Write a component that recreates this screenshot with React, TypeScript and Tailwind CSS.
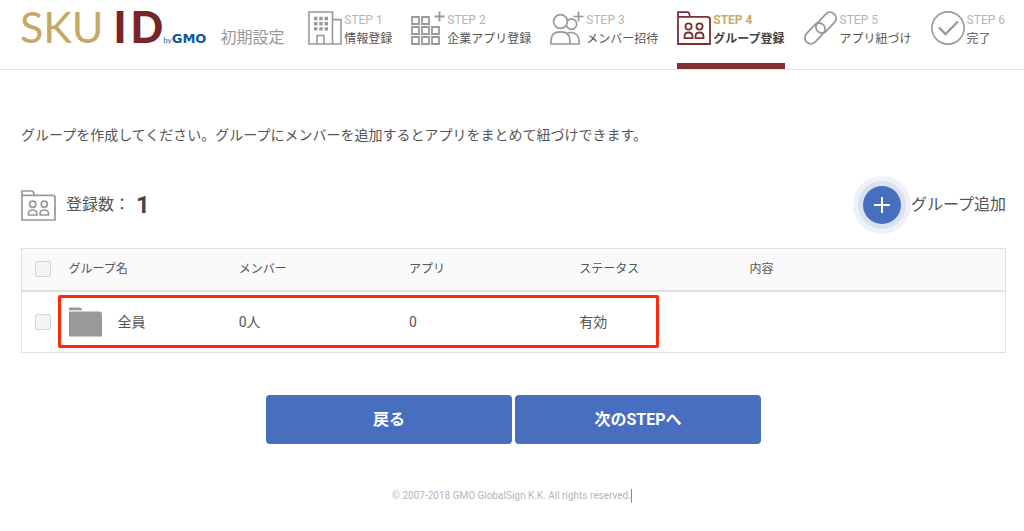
import type { ReactNode } from "react";

function BuildingIcon() {
  return (
    <svg width="34" height="34" viewBox="0 0 34 34" fill="none" stroke="currentColor" strokeWidth="1.6" aria-hidden="true">
      <path d="M1 1H24.500v32H1zM24.500 15.500V8.600H33V33H24.500M9 33v-8.500h7V33" />
      <path strokeWidth="3.400" d="M6 7.500h3.400M11.300 7.500h3.400M16.600 7.500H20M6 12.700h3.400M11.300 12.700h3.400M16.600 12.700H20M6 17.900h3.400M11.300 17.900h3.400M16.600 17.900H20" />
    </svg>
  );
}

function AppsIcon() {
  return (
    <svg width="34" height="34" viewBox="0 0 34 34" fill="none" stroke="currentColor" strokeWidth="1.8" aria-hidden="true">
      <path d="M1 6h7v7H1zM11 6h7v7h-7zM1 16h7v7H1zM11 16h7v7h-7zM21 16h7v7h-7zM1 26h7v7H1zM11 26h7v7h-7zM21 26h7v7h-7zM28.500 .500v10M23.500 5.500h10" />
    </svg>
  );
}

function MembersIcon() {
  return (
    <svg width="34" height="34" viewBox="0 0 34 34" fill="none" stroke="currentColor" strokeWidth="1.7" aria-hidden="true">
      <circle cx="10.500" cy="10.500" r="6.900" />
      <path d="M1 33v-3.500c0-5.500 3.500-8.700 9.500-8.700s9.500 3.200 9.500 8.700V33zM20 33h9v-3c0-5.500-3.500-8.500-8.500-8.500-1.500 0-2.500.200-3.500.700" />
      <path d="M16.500 14.500a5.200 5.200 0 1 0 .500-4M28.500 .500v10M23.500 5.500h10" />
    </svg>
  );
}

function GroupIcon() {
  return (
    <svg width="34" height="34" viewBox="0 0 34 34" fill="none" stroke="currentColor" strokeWidth="1.8" aria-hidden="true">
      <path d="M1 6V1.200h9.500Q12.500 1.200 12.800 5.800H30Q33 5.800 33 8.500V33H1V5.800h12" />
      <circle cx="11.500" cy="15.500" r="3.100" />
      <circle cx="22.500" cy="15.500" r="3.100" />
      <path d="M7.500 27.200v-1.700c0-2.500 1.500-4 4-4s4 1.500 4 4v1.700zM18.500 27.200v-1.700c0-2.500 1.500-4 4-4s4 1.500 4 4v1.700z" />
    </svg>
  );
}

function WideGroupIcon() {
  return (
    <svg width="35" height="31" viewBox="0 0 35 31" fill="none" stroke="currentColor" strokeWidth="1.7" aria-hidden="true">
      <path d="M1 5.500V1h9.500Q12.800 1 13.200 5.300H31.500Q34 5.300 34 7.500V30H1V5.300h12.500" />
      <circle cx="11.700" cy="14.300" r="3.100" />
      <circle cx="23.300" cy="14.300" r="3.100" />
      <path d="M7.500 25v-1.300c0-2.300 1.600-3.700 4.200-3.700s4.200 1.400 4.200 3.700V25zM19.100 25v-1.300c0-2.300 1.600-3.700 4.200-3.700s4.200 1.400 4.200 3.700V25z" />
    </svg>
  );
}

function LinkIcon() {
  return (
    <svg width="34" height="34" viewBox="0 0 34 34" fill="none" stroke="currentColor" strokeWidth="1.800" aria-hidden="true">
      <rect x="-12" y="-6" width="24" height="12" rx="6" transform="translate(22 11.600) rotate(-47)" />
      <rect x="-12" y="-6" width="24" height="12" rx="6" transform="translate(11 22.400) rotate(-47)" />
    </svg>
  );
}

function DoneIcon() {
  return (
    <svg width="34" height="34" viewBox="0 0 34 34" fill="none" stroke="currentColor" strokeWidth="1.600" aria-hidden="true">
      <circle cx="17" cy="17" r="16.100" />
      <path strokeWidth="2.300" d="M8 16.500l6.500 6.500L27 10.500" />
    </svg>
  );
}

type Step = { title: string; label: string; icon: ReactNode; current?: boolean };

const steps: Step[] = [
  { title: "STEP 1", label: "情報登録", icon: <BuildingIcon /> },
  { title: "STEP 2", label: "企業アプリ登録", icon: <AppsIcon /> },
  { title: "STEP 3", label: "メンバー招待", icon: <MembersIcon /> },
  { title: "STEP 4", label: "グループ登録", icon: <GroupIcon />, current: true },
  { title: "STEP 5", label: "アプリ紐づけ", icon: <LinkIcon /> },
  { title: "STEP 6", label: "完了", icon: <DoneIcon /> },
];

const groups = [{ name: "全員", members: "0人", apps: "0", status: "有効", note: "" }];

function StepItem({ step }: { step: Step }) {
  return (
    <li
      aria-current={step.current ? "step" : undefined}
      className={
        step.current
          ? "flex gap-0.5 border-b-6 border-[#7f3034] pt-[11px] font-bold text-[#7f2d31]"
          : "flex gap-0.5 border-b-6 border-transparent pt-[11px] text-[#999]"
      }
    >
      {step.icon}
      <div className="text-xs leading-[19px] whitespace-nowrap">
        <div className={step.current ? "text-[#c9ab63]" : "text-[#b5b5b5]"}>{step.title}</div>
        <div className={step.current ? "text-[#444]" : "text-[#555]"}>{step.label}</div>
      </div>
    </li>
  );
}

function Logo() {
  return (
    <a href="#" aria-label="SKUID by GMO" className="flex items-baseline font-['Lato',sans-serif] leading-none">
      <span className="text-[43px] text-[#c4a965]">SKU</span>
      <span className="ml-2.5 flex gap-1 text-[43px] font-black text-[#782529]">
        <span>I</span>
        <span>D</span>
      </span>
      <span className="text-[8px] text-[#1a5fa8]">by</span>
      <span className="font-['DejaVu_Sans',sans-serif] text-[13px] font-bold text-[#0a5aa6]">GMO</span>
    </a>
  );
}

const checkbox =
  "block size-4 appearance-none rounded-xs border border-[#d4d4d4] bg-[#f4f4f4] checked:bg-[#486fbf]";
const primary =
  "h-[49px] w-[246px] rounded-sm bg-[#486fbf] text-base font-bold text-white hover:bg-[#3c61ad]";

export default function App() {
  return (
    <div className="bg-white font-['Roboto','Noto_Sans_CJK_JP',sans-serif] text-[#555]">
      <header className="flex h-[70px] justify-between border-b border-[#e2e2e2] pr-[19px] pl-5">
        <div className="flex items-baseline gap-3.5 pt-[5px]">
          <Logo />
          <h1 className="text-base whitespace-nowrap text-[#999]">初期設定</h1>
        </div>
        <ol className="flex gap-[19px]">
          {steps.map((step) => (
            <StepItem key={step.title} step={step} />
          ))}
        </ol>
      </header>

      <main className="pt-[55px] pr-[18px] pl-[21px]">
        <p className="text-sm">
          グループを作成してください。グループにメンバーを追加するとアプリをまとめて紐づけできます。
        </p>

        <div className="mt-[31px] flex h-[58px] items-center justify-between">
          <div className="flex items-center gap-2.5">
            <span className="text-[#999]">
              <WideGroupIcon />
            </span>
            <p className="flex items-center text-base">
              登録数：<strong className="ml-1.5 text-2xl text-[#444]">1</strong>
            </p>
          </div>
          <button type="button" className="flex items-center text-base">
            <span className="flex size-[58px] items-center justify-center rounded-full bg-[#edf1f9]">
              <span className="flex size-12 items-center justify-center rounded-full bg-[#dae2f2]">
                <span className="flex size-[38px] items-center justify-center rounded-full bg-[#486fbf]">
                  <svg width="18" height="18" viewBox="0 0 18 18" stroke="#fff" strokeWidth="2" aria-hidden="true">
                    <path d="M9 1v16M1 9h16" />
                  </svg>
                </span>
              </span>
            </span>
            グループ追加
          </button>
        </div>

        <div className="relative mt-3.5">
          <table className="w-full table-fixed border-collapse border border-[#e0e0e0] text-left">
            <thead className="border-b-2 border-[#e0e0e0] bg-[#fafafa] text-xs">
              <tr className="h-[42px]">
                <th className="w-[47px] pl-[13px]">
                  <input type="checkbox" aria-label="すべて選択" className={checkbox} />
                </th>
                <th className="w-[17.3%] font-normal">グループ名</th>
                <th className="w-[17.3%] font-normal">メンバー</th>
                <th className="w-[17.3%] font-normal">アプリ</th>
                <th className="w-[17.3%] font-normal">ステータス</th>
                <th className="font-normal">内容</th>
              </tr>
            </thead>
            <tbody className="text-sm">
              {groups.map((group) => (
                <tr key={group.name} className="h-[62px]">
                  <td className="pl-[13px]">
                    <input type="checkbox" aria-label={group.name} className={checkbox} />
                  </td>
                  <td>
                    <div className="flex items-center gap-4">
                      <svg width="33" height="30" viewBox="0 0 33 30" fill="#999" aria-hidden="true">
                        <path d="M0 .500h10.500Q13 .500 13.500 3.200H0zM0 4.500h30.500q2.500 0 2.500 2.500v22.500H0z" />
                      </svg>
                      {group.name}
                    </div>
                  </td>
                  <td>{group.members}</td>
                  <td>{group.apps}</td>
                  <td>{group.status}</td>
                  <td>{group.note}</td>
                </tr>
              ))}
            </tbody>
          </table>
          <div className="pointer-events-none absolute right-[35.2%] bottom-[5px] left-[37px] h-[53px] rounded-xs border-3 border-[#ff2a0a]" />
        </div>

        <div className="mt-[42px] flex justify-center gap-[3px]">
          <button type="button" className={primary}>戻る</button>
          <button type="button" className={primary}>次のSTEPへ</button>
        </div>
      </main>

      <footer className="mt-[45px] flex justify-center pb-6">
        <small className="border-r border-[#888] text-[10px] leading-3.5 text-[#b5b5b5]">
          © 2007-2018 GMO GlobalSign K.K. All rights reserved.
        </small>
      </footer>
    </div>
  );
}
